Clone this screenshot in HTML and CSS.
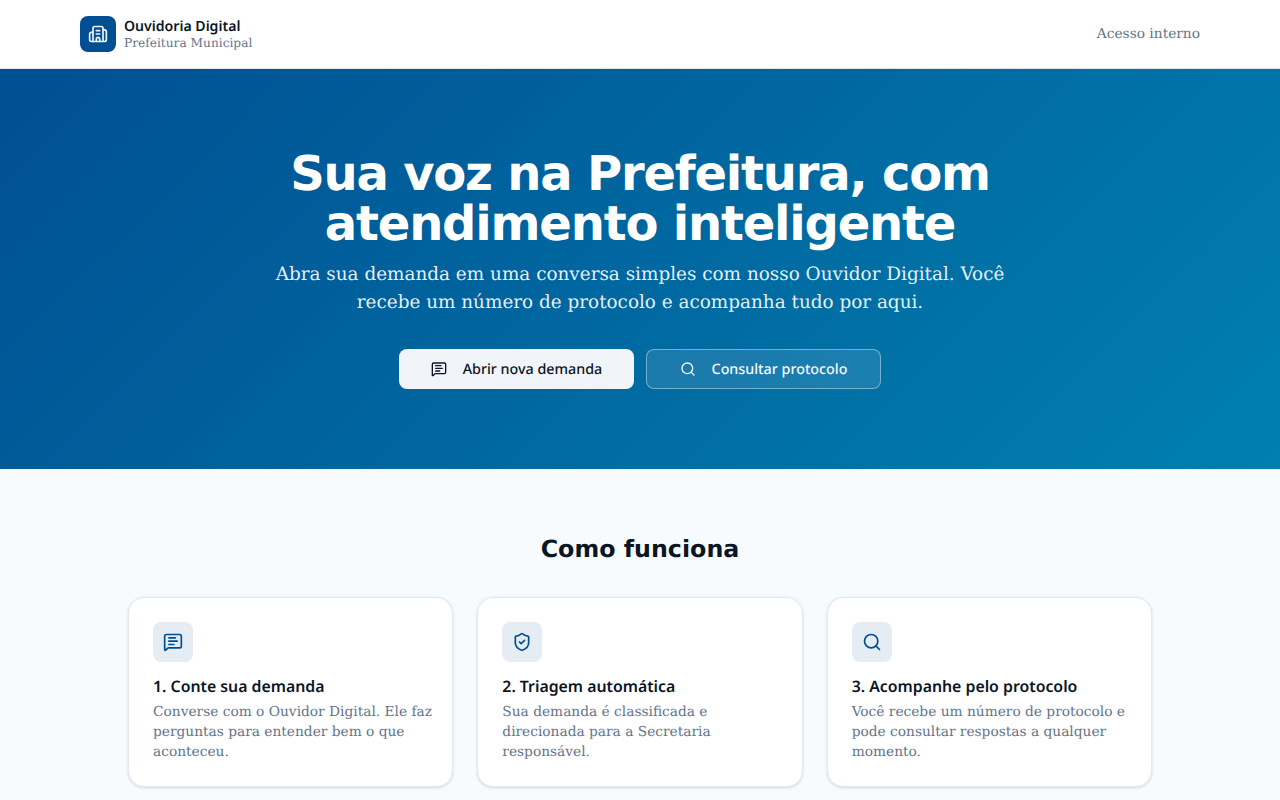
FILE: index.html
```html
<!DOCTYPE html>
<html lang="pt-BR">
<head>
<meta charset="utf-8">
<title>Ouvidoria Digital</title>
<link rel="stylesheet" href="styles.css">
</head>
<body>
<header class="topbar">
  <div class="topbar-inner">
    <a class="brand" href="#">
      <span class="brand-mark">
        <svg class="icon-20" viewBox="0 0 24 24"><path d="M10 12h4"/><path d="M10 8h4"/><path d="M14 21v-3a2 2 0 0 0-4 0v3"/><path d="M6 10H4a2 2 0 0 0-2 2v7a2 2 0 0 0 2 2h16a2 2 0 0 0 2-2V9a2 2 0 0 0-2-2h-2"/><path d="M6 21V5a2 2 0 0 1 2-2h8a2 2 0 0 1 2 2v16"/></svg>
      </span>
      <span class="brand-text">
        <span class="brand-name">Ouvidoria Digital</span>
        <span class="brand-sub">Prefeitura Municipal</span>
      </span>
    </a>
    <a class="internal" href="#">Acesso interno</a>
  </div>
</header>
<section class="hero">
  <h1>Sua voz na Prefeitura, com atendimento inteligente</h1>
  <p>Abra sua demanda em uma conversa simples com nosso Ouvidor Digital. Você recebe um número de protocolo e acompanha tudo por aqui.</p>
  <div class="actions">
    <a class="btn btn-light" href="#">
      <svg class="icon-16" viewBox="0 0 24 24"><path d="M22 17a2 2 0 0 1-2 2H6.828a2 2 0 0 0-1.414.586l-2.202 2.202A.71.71 0 0 1 2 21.286V5a2 2 0 0 1 2-2h16a2 2 0 0 1 2 2z"/><path d="M7 11h10"/><path d="M7 15h6"/><path d="M7 7h8"/></svg>
      Abrir nova demanda
    </a>
    <a class="btn btn-ghost" href="#">
      <svg class="icon-16" viewBox="0 0 24 24"><path d="m21 21-4.34-4.34"/><circle cx="11" cy="11" r="8"/></svg>
      Consultar protocolo
    </a>
  </div>
</section>
<main class="how">
  <h2>Como funciona</h2>
  <div class="cards">
    <article class="card">
      <span class="card-icon"><svg class="icon-20" viewBox="0 0 24 24"><path d="M22 17a2 2 0 0 1-2 2H6.828a2 2 0 0 0-1.414.586l-2.202 2.202A.71.71 0 0 1 2 21.286V5a2 2 0 0 1 2-2h16a2 2 0 0 1 2 2z"/><path d="M7 11h10"/><path d="M7 15h6"/><path d="M7 7h8"/></svg></span>
      <h3>1. Conte sua demanda</h3>
      <p>Converse com o Ouvidor Digital. Ele faz perguntas para entender bem o que aconteceu.</p>
    </article>
    <article class="card">
      <span class="card-icon"><svg class="icon-20" viewBox="0 0 24 24"><path d="M20 13c0 5-3.5 7.5-7.66 8.95a1 1 0 0 1-.67-.01C7.5 20.5 4 18 4 13V6a1 1 0 0 1 1-1c2 0 4.5-1.2 6.24-2.72a1.17 1.17 0 0 1 1.52 0C14.51 3.81 17 5 19 5a1 1 0 0 1 1 1z"/><path d="m9 12 2 2 4-4"/></svg></span>
      <h3>2. Triagem automática</h3>
      <p>Sua demanda é classificada e direcionada para a Secretaria responsável.</p>
    </article>
    <article class="card">
      <span class="card-icon"><svg class="icon-20" viewBox="0 0 24 24"><path d="m21 21-4.34-4.34"/><circle cx="11" cy="11" r="8"/></svg></span>
      <h3>3. Acompanhe pelo protocolo</h3>
      <p>Você recebe um número de protocolo e pode consultar respostas a qualquer momento.</p>
    </article>
  </div>
</main>
</body>
</html>
```
FILE: styles.css
```css
* { box-sizing: border-box; }
html, body { margin: 0; padding: 0; }
body {
  background: #f8fbfd;
  color: #0a1626;
  font-family: "DejaVu Serif", serif;
  text-rendering: geometricPrecision;
  height: 800px;
  overflow: hidden;
}
a { text-decoration: none; color: inherit; }
svg {
  fill: none;
  stroke: currentColor;
  stroke-width: 2;
  stroke-linecap: round;
  stroke-linejoin: round;
  flex: none;
  display: block;
}
.icon-20 { width: 20px; height: 20px; }
.icon-16 { width: 16px; height: 16px; }

.topbar {
  height: 69px;
  background: #fff;
  border-bottom: 1px solid #dfe6ee;
}
.topbar-inner {
  height: 68px;
  padding: 0 80px;
  display: flex;
  align-items: center;
  justify-content: space-between;
}
.brand { display: flex; align-items: center; gap: 8px; }
.brand-mark {
  width: 36px;
  height: 36px;
  border-radius: 8px;
  background: #004f92;
  color: #f1f5f9;
  display: flex;
  align-items: center;
  justify-content: center;
}
.brand-text { display: flex; flex-direction: column; }
.brand-name {
  font-family: "Noto Sans", sans-serif;
  font-weight: 600;
  font-size: 14.1px;
  line-height: 18px;
  padding-top: 1px;
  margin-bottom: -1px;
  color: #0a1626;
}
.brand-sub {
  font-size: 12.2px;
  line-height: 16px;
  color: #64748b;
}
.internal { font-size: 13.75px; line-height: 20px; color: #64748b; }

.hero {
  height: 400px;
  background: linear-gradient(135deg, #004f92 0%, #0080ae 100%);
  color: #f7fafc;
  display: flex;
  flex-direction: column;
  align-items: center;
  padding-top: 80px;
  text-align: center;
}
.hero h1 {
  margin: 0;
  width: 768px;
  font-family: "DejaVu Sans", sans-serif;
  font-weight: 700;
  font-size: 48px;
  line-height: 50px;
  letter-spacing: -0.025em;
  color: #fff;
}
.hero p {
  margin: 12px 0 0;
  width: 768px;
  font-size: 18.4px;
  line-height: 28px;
  color: rgba(247, 250, 252, 0.95);
}
.actions { display: flex; gap: 12px; margin-top: 32px; }
.btn {
  height: 40px;
  width: 235px;
  border-radius: 8px;
  display: flex;
  align-items: center;
  justify-content: center;
  gap: 16px;
  font-family: "Noto Sans", sans-serif;
  font-weight: 500;
  font-size: 14.3px;
}
.btn-light { background: #f1f5f9; color: #0a1626; }
.btn-ghost {
  background: rgba(255, 255, 255, 0.1);
  border: 1px solid rgba(255, 255, 255, 0.4);
  color: #f7fafc;
}

.how { padding: 64px 128px 0; }
.how h2 {
  margin: 0;
  text-align: center;
  font-family: "DejaVu Sans", sans-serif;
  font-weight: 700;
  font-size: 23.76px;
  line-height: 32px;
  color: #0a1626;
}
.cards {
  display: grid;
  grid-template-columns: repeat(3, 1fr);
  gap: 24px;
  margin-top: 32px;
}
.card {
  background: #fff;
  border: 1px solid #e2e8f0;
  border-radius: 16px;
  padding: 24px;
  height: 190px;
  box-shadow: 0 1px 3px rgba(10, 22, 38, 0.14);
}
.card-icon {
  width: 40px;
  height: 40px;
  border-radius: 8px;
  background: #e5ecf3;
  color: #004f92;
  display: flex;
  align-items: center;
  justify-content: center;
}
.card h3 {
  margin: 12px 0 4px;
  font-family: "Noto Sans", sans-serif;
  font-weight: 600;
  font-size: 15.84px;
  line-height: 24px;
  color: #0a1626;
}
.card p {
  margin: 0 -4px 0 0;
  font-size: 13.76px;
  line-height: 20px;
  color: #64748b;
}
```
